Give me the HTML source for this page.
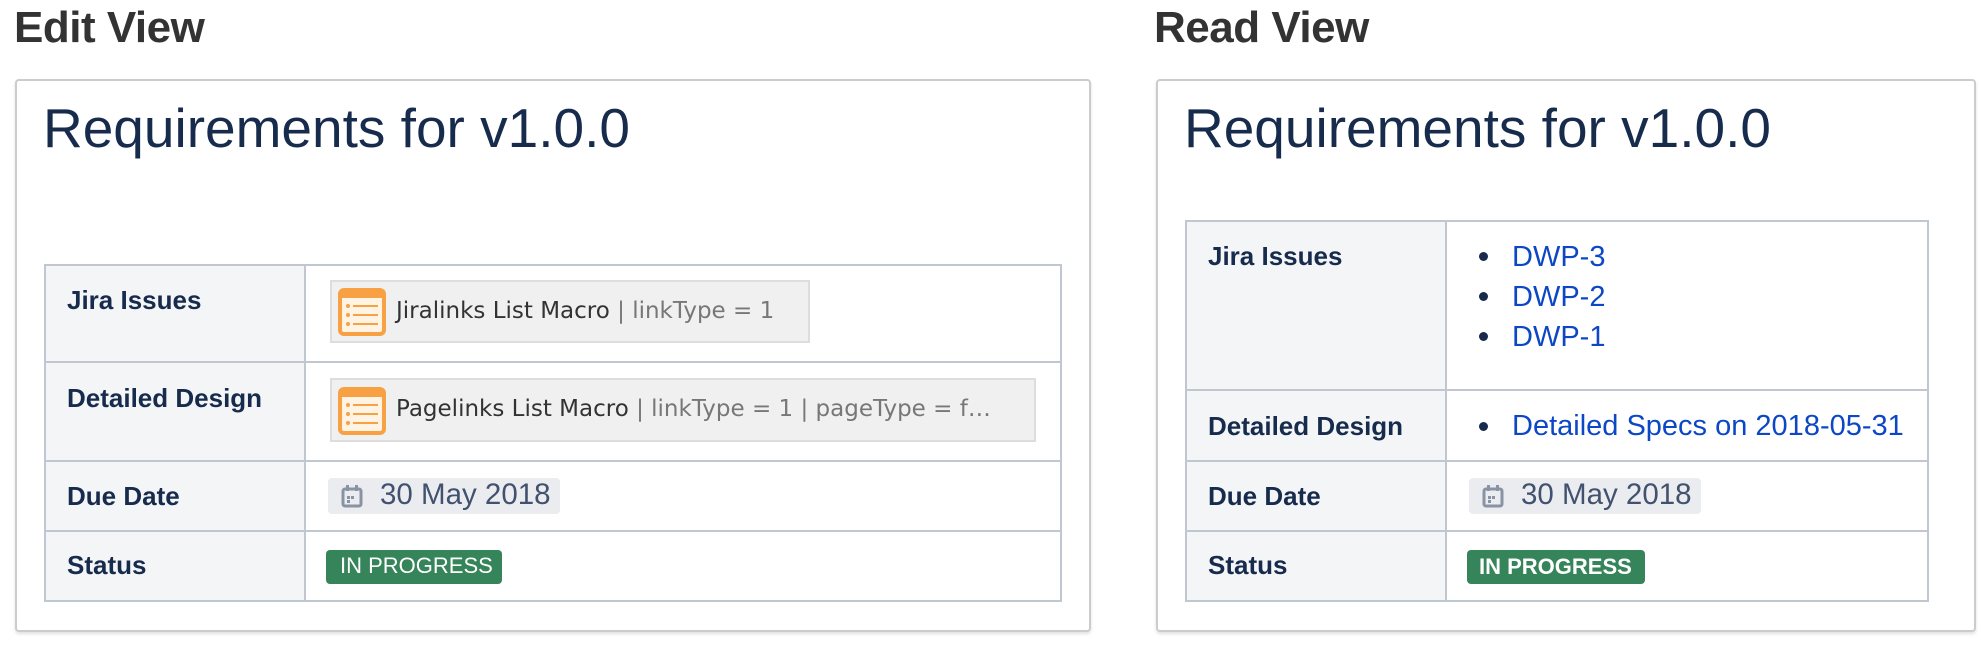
<!DOCTYPE html>
<html><head><meta charset="utf-8"><style>
*{margin:0;padding:0;box-sizing:border-box}
body{width:1981px;height:654px;background:#fff;position:relative;overflow:hidden;font-family:"Liberation Sans",sans-serif;color:#172b4d}
.a{position:absolute}
.h{font-weight:bold;font-size:44px;color:#333;top:3px;letter-spacing:-0.5px}
.card{border:2px solid #ccc;border-radius:4px;box-shadow:0 2px 3px rgba(0,0,0,0.12);background:#fff}
.title{font-size:55px;color:#172b4d;line-height:1}
.tbl{border:2px solid #c1c7d0;background:#fff}
.lab{background:#f4f5f7;border-right:2px solid #c1c7d0}
.hr{height:2px;background:#c1c7d0}
.l{font-weight:bold;font-size:26px;line-height:1}
.macro{background:#f0f0f0;border:2px solid #ddd;font-family:"DejaVu Sans",sans-serif;font-size:23px;color:#333;white-space:nowrap;line-height:1}
.macro .g{color:#777}
.date{background:#ebecf0;border-radius:4px;font-size:29.5px;color:#42526e;line-height:1}
.st{background:#36845a;border-radius:4px;color:#fff;font-size:21px;line-height:1}
.lk{font-size:29px;line-height:1;color:#0c47c6}
.dot{width:9px;height:9px;border-radius:50%;background:#172b4d}
</style></head><body>
<div class="a h" style="left:14px">Edit View</div>
<div class="a h" style="left:1154px">Read View</div>

<div class="a card" style="left:15px;top:79px;width:1076px;height:553px"></div>
<div class="a title" style="left:43px;top:101px">Requirements for v1.0.0</div>
<div class="a tbl" style="left:44px;top:264px;width:1018px;height:338px"></div>
<div class="a lab" style="left:46px;top:266px;width:260px;height:334px"></div>
<div class="a hr" style="left:46px;top:361px;width:1014px"></div>
<div class="a hr" style="left:46px;top:460px;width:1014px"></div>
<div class="a hr" style="left:46px;top:530px;width:1014px"></div>
<div class="a l" style="left:67px;top:287px">Jira Issues</div>
<div class="a l" style="left:67px;top:385px">Detailed Design</div>
<div class="a l" style="left:67px;top:483px">Due Date</div>
<div class="a l" style="left:67px;top:552px">Status</div>

<div class="a macro" style="left:330px;top:280px;width:480px;height:63px"></div>
<div class="a macro" style="left:330px;top:378px;width:706px;height:64px"></div>
<svg class="a" style="left:338px;top:288px" width="48" height="48" viewBox="0 0 48 48"><rect x="2" y="2" width="44" height="44" rx="4" fill="#fff3e4" stroke="#f7a144" stroke-width="4"/><rect x="2" y="2" width="44" height="8" fill="#f7a144"/><g fill="#f7a144"><circle cx="10" cy="18" r="2"/><circle cx="10" cy="27" r="2"/><circle cx="10" cy="36" r="2"/><rect x="15" y="17" width="25" height="2"/><rect x="15" y="26" width="25" height="2"/><rect x="15" y="35" width="25" height="2"/></g></svg>
<svg class="a" style="left:338px;top:387px" width="48" height="48" viewBox="0 0 48 48"><rect x="2" y="2" width="44" height="44" rx="4" fill="#fff3e4" stroke="#f7a144" stroke-width="4"/><rect x="2" y="2" width="44" height="8" fill="#f7a144"/><g fill="#f7a144"><circle cx="10" cy="18" r="2"/><circle cx="10" cy="27" r="2"/><circle cx="10" cy="36" r="2"/><rect x="15" y="17" width="25" height="2"/><rect x="15" y="26" width="25" height="2"/><rect x="15" y="35" width="25" height="2"/></g></svg>
<div class="a macro" style="left:396px;top:300px;border:none;background:none">Jiralinks List Macro <span class="g">| linkType = 1</span></div>
<div class="a macro" style="left:396px;top:398px;border:none;background:none">Pagelinks List Macro <span class="g">| linkType = 1 | pageType = f…</span></div>

<div class="a date" style="left:328px;top:478px;width:232px;height:36px"></div>
<svg class="a" style="left:341px;top:484px" width="22" height="24" viewBox="0 0 22 24"><rect x="2" y="5" width="18" height="17" rx="2" fill="none" stroke="#8993a4" stroke-width="3"/><rect x="5" y="1" width="3" height="6" fill="#8993a4"/><rect x="14" y="1" width="3" height="6" fill="#8993a4"/><rect x="6" y="12" width="3" height="3" fill="#8993a4"/><rect x="6" y="16" width="3" height="3" fill="#8993a4"/><rect x="10" y="12" width="3" height="3" fill="#8993a4"/></svg>
<div class="a date" style="left:380px;top:480px;background:none">30 May 2018</div>
<div class="a st" style="left:326px;top:550px;width:176px;height:34px"></div>
<div class="a st" style="left:340px;top:555px;background:none;font-size:22px">IN PROGRESS</div>

<div class="a card" style="left:1156px;top:79px;width:820px;height:553px"></div>
<div class="a title" style="left:1184px;top:101px">Requirements for v1.0.0</div>
<div class="a tbl" style="left:1185px;top:220px;width:744px;height:382px"></div>
<div class="a lab" style="left:1187px;top:222px;width:260px;height:378px"></div>
<div class="a hr" style="left:1187px;top:389px;width:740px"></div>
<div class="a hr" style="left:1187px;top:460px;width:740px"></div>
<div class="a hr" style="left:1187px;top:530px;width:740px"></div>
<div class="a l" style="left:1208px;top:243px">Jira Issues</div>
<div class="a l" style="left:1208px;top:413px">Detailed Design</div>
<div class="a l" style="left:1208px;top:483px">Due Date</div>
<div class="a l" style="left:1208px;top:552px">Status</div>
<div class="a dot" style="left:1479px;top:252px"></div>
<div class="a dot" style="left:1479px;top:292px"></div>
<div class="a dot" style="left:1479px;top:332px"></div>
<div class="a dot" style="left:1479px;top:422px"></div>
<div class="a lk" style="left:1512px;top:243px">DWP-3</div>
<div class="a lk" style="left:1512px;top:283px">DWP-2</div>
<div class="a lk" style="left:1512px;top:323px">DWP-1</div>
<div class="a lk" style="left:1512px;top:412px">Detailed Specs on 2018-05-31</div>
<div class="a date" style="left:1469px;top:478px;width:232px;height:36px"></div>
<svg class="a" style="left:1482px;top:484px" width="22" height="24" viewBox="0 0 22 24"><rect x="2" y="5" width="18" height="17" rx="2" fill="none" stroke="#8993a4" stroke-width="3"/><rect x="5" y="1" width="3" height="6" fill="#8993a4"/><rect x="14" y="1" width="3" height="6" fill="#8993a4"/><rect x="6" y="12" width="3" height="3" fill="#8993a4"/><rect x="6" y="16" width="3" height="3" fill="#8993a4"/><rect x="10" y="12" width="3" height="3" fill="#8993a4"/></svg>
<div class="a date" style="left:1521px;top:480px;background:none">30 May 2018</div>
<div class="a st" style="left:1467px;top:550px;width:178px;height:34px"></div>
<div class="a st" style="left:1479px;top:556px;background:none;font-weight:bold;font-size:22px">IN PROGRESS</div>
</body></html>
